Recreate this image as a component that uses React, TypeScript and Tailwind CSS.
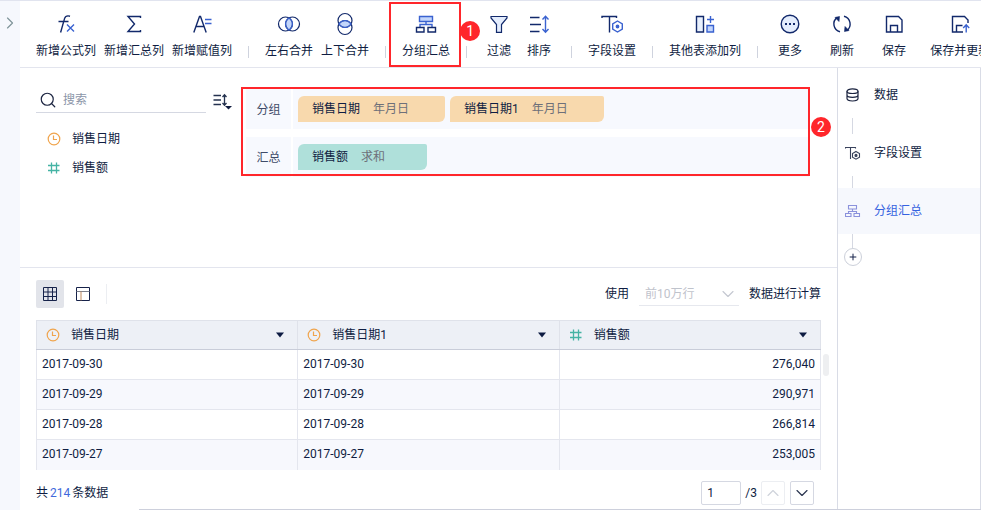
import type { ReactNode } from 'react'
import { ChevronDown, ChevronRight, ChevronUp, Plus, Search } from 'lucide-react'

const NAVY = '#12296b'
const BLUE = '#3a62d0'
const PALE = '#c3d6fb'

function Glyph({ children, size = 24 }: { children: ReactNode; size?: number }) {
  return (
    <svg width={size} height={size} viewBox="0 0 24 24" fill="none" stroke={NAVY} strokeWidth="1.4" aria-hidden="true">
      {children}
    </svg>
  )
}

const icons = {
  formula: (
    <>
      <path d="M16 4.2C13 3.4 11.4 4 10.6 6.4L6.6 20.5M4.5 9.5H14.5" />
      <path d="M13 12.5L20 19.5M20 12.5L13 19.5" stroke={BLUE} />
    </>
  ),
  sum: <path d="M18.5 6V4.5H6L12.5 12L6 19.5H18.5V18" />,
  assign: (
    <>
      <path d="M3.8 20.5L9.5 4.5H10.5L16.2 20.5M6 14.5H14" />
      <path d="M15 7.5H21.5M15 11.5H21.5" stroke={BLUE} />
    </>
  ),
  mergeH: (
    <>
      <path d="M12 6A7 7 0 0 1 12 18A7 7 0 0 1 12 6Z" fill={PALE} stroke="none" />
      <circle cx="8.5" cy="12" r="7" strokeWidth="1.2" />
      <circle cx="15.5" cy="12" r="7" strokeWidth="1.2" />
      <path d="M12 6A7 7 0 0 1 12 18A7 7 0 0 1 12 6Z" stroke={BLUE} strokeWidth="1.2" />
    </>
  ),
  mergeV: (
    <>
      <path d="M6 12A7 7 0 0 1 18 12A7 7 0 0 1 6 12Z" fill={PALE} stroke="none" />
      <circle cx="12" cy="8.5" r="7" strokeWidth="1.2" />
      <circle cx="12" cy="15.5" r="7" strokeWidth="1.2" />
      <path d="M6 12A7 7 0 0 1 18 12A7 7 0 0 1 6 12Z" stroke={BLUE} strokeWidth="1.2" />
    </>
  ),
  group: (
    <>
      <path d="M5.5 4.5H18.5V9.5H5.5Z" fill={PALE} stroke={BLUE} />
      <path d="M12 9.5V12.5M6 15V12.5H18V15" stroke={BLUE} />
      <path d="M2.5 15.5H10V20H2.5ZM14 15.5H21.5V20H14Z" />
    </>
  ),
  filter: <path d="M4 4.5H20V6L14.5 12.5V20.3H9.5V12.5L4 6Z" fill="#e4edfd" strokeWidth="1.2" />,
  sort: (
    <>
      <path d="M3 5.5H12.5M3 12.5H14M3 19.5H12.5" />
      <path d="M18.5 4.5V20M15.5 7.5L18.5 4.3L21.5 7.5M15.5 17L18.5 20.2L21.5 17" stroke={BLUE} />
    </>
  ),
  field: (
    <>
      <path d="M2 6V4.5H16.5V6M9.5 4.5V20.5" />
      <path d="M17.5 9L22.3 11.8V17.2L17.5 20L12.7 17.2V11.8Z" stroke={BLUE} fill="#fff" />
      <circle cx="17.5" cy="14.5" r="1.2" fill={BLUE} stroke={BLUE} />
    </>
  ),
  addColumn: (
    <>
      <path d="M3.5 4.5H10.5V20H3.5Z" fill="#e9f1fd" />
      <path d="M17.5 4V11M14 7.5H21" stroke={BLUE} />
      <path d="M14 13.5H20.5V20H14Z" fill={PALE} stroke={BLUE} />
    </>
  ),
  more: (
    <>
      <circle cx="12" cy="12" r="8.8" fill="#e4edfd" />
      <path d="M7 12H9M11 12H13M15 12H17" strokeWidth="1.8" />
    </>
  ),
  refresh: (
    <>
      <path d="M10 19.8A8 8 0 0 1 7.4 5.4M14 4.2A8 8 0 0 1 16.6 18.6" />
      <path d="M5 5.5L9.5 4.5L9 9.5ZM19 18.5L14.5 19.5L15 14.5Z" fill={NAVY} strokeWidth="0.6" />
    </>
  ),
  save: (
    <>
      <path d="M4.5 4.5H16.5L20 8V20H4.5Z" />
      <path d="M8.5 20V13.5H15.5V20" />
    </>
  ),
  saveUpdate: (
    <>
      <path d="M15 20H4.5V4.5H16.5L20 8V11" />
      <path d="M8.5 20V13.5H14.5" />
      <path d="M18.2 20.5V13M15.2 16L18.2 12.8L21.2 16" stroke={BLUE} />
    </>
  ),
}

type Tool = { icon: keyof typeof icons; label: string }

const toolGroups: Tool[][] = [
  [
    { icon: 'formula', label: '新增公式列' },
    { icon: 'sum', label: '新增汇总列' },
    { icon: 'assign', label: '新增赋值列' },
  ],
  [
    { icon: 'mergeH', label: '左右合并' },
    { icon: 'mergeV', label: '上下合并' },
  ],
  [{ icon: 'group', label: '分组汇总' }],
  [
    { icon: 'filter', label: '过滤' },
    { icon: 'sort', label: '排序' },
  ],
  [{ icon: 'field', label: '字段设置' }],
  [{ icon: 'addColumn', label: '其他表添加列' }],
]

const actions: Tool[] = [
  { icon: 'more', label: '更多' },
  { icon: 'refresh', label: '刷新' },
  { icon: 'save', label: '保存' },
  { icon: 'saveUpdate', label: '保存并更新' },
]

const rows = [
  ['2017-09-30', '276,040'],
  ['2017-09-29', '290,971'],
  ['2017-09-28', '266,814'],
  ['2017-09-27', '253,005'],
]

function ClockIcon() {
  return (
    <svg width="14" height="14" viewBox="0 0 14 14" fill="none" stroke="#f0a44c" strokeWidth="1.2" aria-hidden="true">
      <circle cx="7" cy="7" r="5.8" />
      <path d="M6.5 3.5V7.5H10" />
    </svg>
  )
}

function HashIcon() {
  return (
    <svg width="14" height="14" viewBox="0 0 14 14" fill="none" stroke="#45b3a4" strokeWidth="1.3" aria-hidden="true">
      <path d="M1 4.5H12.5M1 9.5H12.5M4.5 1.5V12.5M9.5 1.5V12.5" />
    </svg>
  )
}

function Marker({ children }: { children: ReactNode }) {
  return (
    <span className="flex size-5 items-center justify-center rounded-full bg-[#ff262b] text-sm leading-none text-white">
      {children}
    </span>
  )
}

function ToolButton({ icon, label }: Tool) {
  const marked = icon === 'group'
  return (
    <button type="button" className="relative flex min-w-10 shrink-0 flex-col items-center gap-[7px] px-1 pt-[11px]">
      <Glyph>{icons[icon]}</Glyph>
      <span className="leading-4">{label}</span>
      {marked && (
        <>
          <span className="pointer-events-none absolute -left-[9px] top-px h-[65px] w-[72px] border-2 border-[#ff262b]" />
          <span className="absolute -right-[26px] top-5 z-10">
            <Marker>1</Marker>
          </span>
        </>
      )}
    </button>
  )
}

function Toolbar() {
  return (
    <header className="flex h-[67px] border-b border-[#e3e5ee] pl-3">
      {toolGroups.map((group) => (
        <div key={group[0].label} className="flex shrink-0">
          {group.map((tool) => (
            <ToolButton key={tool.label} {...tool} />
          ))}
          <span className="mx-3 mt-[45px] h-3 w-px bg-[#cfd3de]" />
        </div>
      ))}
      <div className="flex gap-3">
        {actions.map((tool) => (
          <ToolButton key={tool.label} {...tool} />
        ))}
      </div>
    </header>
  )
}

function FieldList() {
  return (
    <aside className="w-[221px] shrink-0 pl-4 pt-5">
      <div className="flex items-center">
        <label className="flex h-[25px] w-[170px] items-center gap-1.5 border-b border-[#d5d8e2] pl-[3px]">
          <Search className="size-[18px] shrink-0 text-[#1b2440]" strokeWidth={1.6} />
          <input
            aria-label="搜索"
            placeholder="搜索"
            className="w-full min-w-0 bg-transparent outline-none placeholder:text-[#8b95a8]"
          />
        </label>
        <button type="button" aria-label="排序方式" className="ml-[7px]">
          <svg width="20" height="18" viewBox="0 0 20 18" fill="none" stroke="#24324f" strokeWidth="1.3" aria-hidden="true">
            <path d="M0.5 3.5H8M0.5 8H8M0.5 12.5H8" />
            <path d="M11.5 3V13M9.5 5L11.5 2.8L13.5 5M9.5 11L11.5 13.2L13.5 11" />
            <path d="M12 14H19L15.5 17.5Z" fill="#101c40" stroke="none" />
          </svg>
        </button>
      </div>
      <ul className="mt-[11px] pl-[11px]">
        <li className="flex h-[29px] items-center gap-[11px]">
          <ClockIcon />
          <span>销售日期</span>
        </li>
        <li className="flex h-[29px] items-center gap-[11px]">
          <HashIcon />
          <span>销售额</span>
        </li>
      </ul>
    </aside>
  )
}

function Chip({ name, mode, green = false }: { name: string; mode: string; green?: boolean }) {
  return (
    <div
      className={`flex h-[26px] min-w-[129px] items-center gap-[13px] rounded-tl-md rounded-tr-xs rounded-br-md pl-3.5 pr-9 ${
        green ? 'bg-[#afe0da]' : 'bg-[#f8d9ad]'
      }`}
    >
      <span>{name}</span>
      <span className="text-[#6e7079]">{mode}</span>
    </div>
  )
}

function DropRow({ label, children }: { label: string; children: ReactNode }) {
  return (
    <div className="flex h-10 gap-0.5">
      <div className="flex w-[45px] items-center justify-center bg-[#f7f9fe] pt-0.5 text-[#3f4b68]">{label}</div>
      <div className="flex flex-1 items-center gap-[5px] bg-[#f7f9fe] pl-[5px]">{children}</div>
    </div>
  )
}

function GroupSettings() {
  return (
    <div className="relative mt-[19px] flex-1 pl-[5px] pr-7">
      <div className="flex flex-col gap-2 pt-0.5">
        <DropRow label="分组">
          <Chip name="销售日期" mode="年月日" />
          <Chip name="销售日期1" mode="年月日" />
        </DropRow>
        <DropRow label="汇总">
          <Chip name="销售额" mode="求和" green />
        </DropRow>
      </div>
      <span className="pointer-events-none absolute left-0 right-[27px] top-0 h-[89px] border-2 border-[#ff262b]" />
      <span className="absolute right-1.5 top-[30px]">
        <Marker>2</Marker>
      </span>
    </div>
  )
}

function HeaderCell({ icon, title }: { icon: ReactNode; title: string }) {
  return (
    <th className="h-[29px] border border-[#dfe2ea] border-b-[#c9cdd9] p-0 font-normal">
      <div className="flex items-center gap-[11px] pl-[9px] pr-[13px]">
        {icon}
        <span>{title}</span>
        <svg className="ml-auto" width="8" height="6" viewBox="0 0 8 6" fill="#0d1b42" aria-hidden="true">
          <path d="M0 0.5H8L4 5.5Z" />
        </svg>
      </div>
    </th>
  )
}

function Preview() {
  return (
    <section className="flex-1 border-t border-[#e3e5ee] px-4 pt-3">
      <div className="flex h-7 items-center">
        <button type="button" aria-label="表格" className="flex size-7 items-center justify-center rounded-xs bg-[#e2e4ea]">
          <svg width="14" height="14" viewBox="0 0 14 14" fill="none" stroke="#16224a" aria-hidden="true">
            <path d="M0.5 0.5H13.5V13.5H0.5ZM5 0.5V13.5M9.5 0.5V13.5M0.5 5H13.5M0.5 9.5H13.5" />
          </svg>
        </button>
        <button type="button" aria-label="视图" className="ml-[5px] flex size-7 items-center justify-center">
          <svg width="14" height="14" viewBox="0 0 14 14" fill="none" stroke="#16224a" aria-hidden="true">
            <path d="M0.5 0.5H13.5V13.5H0.5Z" />
            <path d="M0.5 4.5H13.5" stroke="#7d808c" />
            <path d="M5 4.5V13.5" stroke="#c08a5c" />
          </svg>
        </button>
        <span className="ml-[9px] h-5 w-px bg-[#eceef2]" />
        <label htmlFor="limit" className="ml-auto">
          使用
        </label>
        <div className="relative ml-2.5 mr-2.5 w-[100px]">
          <select
            id="limit"
            disabled
            className="h-6 w-full appearance-none border-b border-[#e6e8ee] bg-transparent pl-1.5 text-[#bfc3cc] opacity-100"
          >
            <option>前10万行</option>
          </select>
          <ChevronDown className="pointer-events-none absolute right-px top-0.5 size-5 text-[#c3c7d0]" strokeWidth={1.3} />
        </div>
        <span>数据进行计算</span>
      </div>

      <div className="relative mt-3">
        <table className="w-full table-fixed border-collapse text-left">
          <thead className="bg-[#edf0f6]">
            <tr>
              <HeaderCell icon={<ClockIcon />} title="销售日期" />
              <HeaderCell icon={<ClockIcon />} title="销售日期1" />
              <HeaderCell icon={<HashIcon />} title="销售额" />
            </tr>
          </thead>
          <tbody>
            {rows.map(([date, amount]) => (
              <tr key={date} className="h-[30px] border-b border-[#e4e6ee] last:border-b-0 even:bg-[#f7f8fd]">
                <td className="border-x border-[#e4e6ee] px-[5px] pt-0 pb-0.5">{date}</td>
                <td className="border-x border-[#e4e6ee] px-[5px] pt-0 pb-0.5">{date}</td>
                <td className="border-x border-[#e4e6ee] px-[5px] pt-0 pb-0.5 text-right">{amount}</td>
              </tr>
            ))}
          </tbody>
        </table>
        <span className="absolute -right-2 top-[34px] h-[22px] w-1.5 rounded-full bg-[#eeeff1]" />
      </div>

      <footer className="mt-[11px] flex h-6 items-center pr-[7px]">
        <p>
          共<span className="mx-0.5 text-[#3f69dc]">214</span>条数据
        </p>
        <input
          aria-label="页码"
          defaultValue="1"
          className="ml-auto h-6 w-10 rounded-xs border border-[#d5d8e2] bg-white pl-[5px]"
        />
        <span className="mx-1">/3</span>
        <button
          type="button"
          disabled
          aria-label="上一页"
          className="flex size-6 items-center justify-center rounded-xs border border-[#eceef2] text-[#cfd3db]"
        >
          <ChevronUp className="size-5 shrink-0" strokeWidth={1.4} />
        </button>
        <button
          type="button"
          aria-label="下一页"
          className="ml-[5px] flex size-6 items-center justify-center rounded-xs border border-[#d5d8e2] text-[#2b3550]"
        >
          <ChevronDown className="size-5 shrink-0" strokeWidth={1.4} />
        </button>
      </footer>
    </section>
  )
}

function Step({ icon, label, active = false }: { icon: ReactNode; label: string; active?: boolean }) {
  return (
    <button
      type="button"
      className={`flex h-[46px] w-full items-center gap-[13px] pl-[7px] ${active ? 'bg-[#f6f8fd] text-[#3562e0]' : ''}`}
    >
      {icon}
      <span>{label}</span>
    </button>
  )
}

function Steps() {
  return (
    <aside className="w-36 shrink-0 border-x border-[#d9dce6] pt-1">
      <Step
        label="数据"
        icon={
          <svg width="16" height="16" viewBox="0 0 16 16" fill="none" stroke="#1b2440" strokeWidth="1.2" aria-hidden="true">
            <ellipse cx="7.5" cy="4.2" rx="5.5" ry="2.3" />
            <path d="M2 4.2V11.6C2 13 4.4 14 7.5 14S13 13 13 11.6V4.2M2 8C2 9.3 4.4 10.3 7.5 10.3S13 9.3 13 8" />
          </svg>
        }
      />
      <span className="-mb-1 ml-3.5 block h-4 w-px bg-[#d5d8e2]" />
      <Step
        label="字段设置"
        icon={
          <svg width="16" height="16" viewBox="0 0 16 16" fill="none" stroke="#39425c" strokeWidth="1.1" aria-hidden="true">
            <path d="M0.5 3.5V2.5H10.5V3.5M5.5 2.5V14" />
            <path d="M11 6.5L14.5 8.5V12.2L11 14.2L7.5 12.2V8.5Z" fill="#fff" />
            <circle cx="11" cy="10.4" r="1" fill="#39425c" />
          </svg>
        }
      />
      <span className="-mb-1 ml-3.5 block h-4 w-px bg-[#d5d8e2]" />
      <Step
        active
        label="分组汇总"
        icon={
          <svg width="16" height="16" viewBox="0 0 16 16" fill="none" stroke="#8b92dc" strokeWidth="1.1" aria-hidden="true">
            <path d="M3.5 2.5H11.5V6H3.5ZM7.5 6V8.5M3.5 10.5V8.5H11.5V10.5M0.5 10.5H6V13.5H0.5ZM9 10.5H14.5V13.5H9Z" />
          </svg>
        }
      />
      <span className="ml-3.5 block h-3.5 w-px bg-[#d5d8e2]" />
      <button
        type="button"
        aria-label="添加步骤"
        className="ml-1.5 flex size-[18px] items-center justify-center rounded-full border border-[#ccd0da] text-[#16224a]"
      >
        <Plus className="size-2.5" strokeWidth={2.4} />
      </button>
    </aside>
  )
}

export default function App() {
  return (
    <div className="flex min-h-screen overflow-hidden border-t border-[#e1e4ef] bg-white font-['Roboto','Noto_Sans_CJK_SC',sans-serif] text-xs text-[#0f1d42]">
      <nav className="w-5 shrink-0 bg-[#f6f8fd] pt-3">
        <button type="button" aria-label="展开" className="flex w-full justify-center text-[#7f9499]">
          <ChevronRight className="size-5" strokeWidth={1.4} />
        </button>
      </nav>
      <div className="flex min-w-0 flex-1 flex-col">
        <Toolbar />
        <div className="flex flex-1">
          <main className="flex min-w-0 flex-1 flex-col">
            <div className="flex h-[199px]">
              <FieldList />
              <GroupSettings />
            </div>
            <Preview />
          </main>
          <Steps />
        </div>
        <div className="ml-[119px] h-px bg-[#cdd0dc]" />
      </div>
    </div>
  )
}
